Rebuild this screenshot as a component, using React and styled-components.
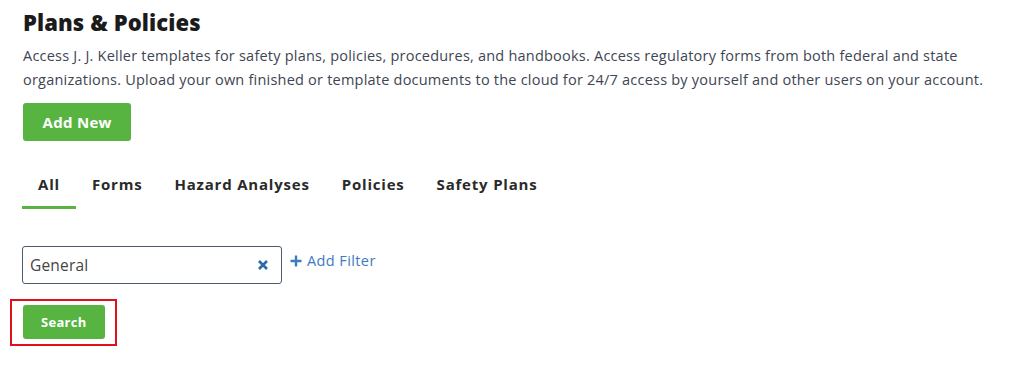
import React from "react";
import styled, { createGlobalStyle } from "styled-components";

const Global = createGlobalStyle`
  body { margin: 0; background: #fff; font-family: "Open Sans", "Lato", sans-serif; }
`;

const Page = styled.div`
  padding: 8px 23px 0 23px;
  display: flex;
  flex-direction: column;
  align-items: flex-start;
`;

const Title = styled.h1`
  margin: 0;
  font-size: 22px;
  font-weight: 800;
  color: #1b1b1b;
  line-height: 28px;
  letter-spacing: 0.1px;
`;

const Desc = styled.p`
  margin: 8px 0 0;
  font-size: 14.5px;
  line-height: 24px;
  color: #3e4552;
  letter-spacing: 0.22px;
  max-width: 975px;
`;

const GreenButton = styled.button`
  background: #57b440;
  color: #fff;
  border: none;
  border-radius: 3px;
  font-family: inherit;
  font-weight: 700;
  letter-spacing: 0.3px;
  font-size: ${(p) => (p.$small ? "13px" : "15px")};
  height: ${(p) => (p.$small ? "34px" : "38px")};
  padding: 0 ${(p) => (p.$small ? "18px" : "19.5px")};
  cursor: pointer;
  display: block;
`;

const AddWrap = styled.div`
  margin-top: 11px;
`;

const Tabs = styled.div`
  display: flex;
  margin: 24px 0 0 -1px;
`;

const Tab = styled.div`
  padding: 9px 16px 12px;
  font-size: 15px;
  font-weight: 700;
  letter-spacing: 0.8px;
  color: #2a2a2a;
  border-bottom: 3px solid ${(p) => (p.$active ? "#57b440" : "transparent")};
`;

const FilterRow = styled.div`
  display: flex;
  align-items: flex-start;
  gap: 8px;
  margin: 37px 0 0 -1px;
`;

const InputBox = styled.div`
  width: 260px;
  height: 38px;
  box-sizing: border-box;
  border: 1px solid #4e5a6e;
  border-radius: 3px;
  display: flex;
  align-items: center;
  padding: 0 12px 0 7px;
  justify-content: space-between;
`;

const InputText = styled.span`
  font-size: 15.5px;
  color: #444;
  letter-spacing: 0.2px;
`;

const Clear = styled.svg`
  width: 12px;
  height: 12px;
`;

const AddFilter = styled.a`
  display: flex;
  align-items: center;
  gap: 5px;
  margin-top: 5px;
  font-size: 14.5px;
  letter-spacing: 0.4px;
  color: #3d7bbd;
  text-decoration: none;
`;

const SearchFrame = styled.div`
  margin: 15px 0 0 -13px;
  border: 2px solid #e0101a;
  padding: 4px 10px 5px 11px;
`;

export default function App() {
  return (
    <>
      <Global />
      <Page>
        <Title>Plans &amp; Policies</Title>
        <Desc>
          Access J. J. Keller templates for safety plans, policies, procedures, and handbooks. Access regulatory forms from both federal and state organizations. Upload your own finished or template documents to the cloud for 24/7 access by yourself and other users on your account.
        </Desc>
        <AddWrap>
          <GreenButton>Add New</GreenButton>
        </AddWrap>
        <Tabs>
          <Tab $active>All</Tab>
          <Tab>Forms</Tab>
          <Tab>Hazard Analyses</Tab>
          <Tab>Policies</Tab>
          <Tab>Safety Plans</Tab>
        </Tabs>
        <FilterRow>
          <InputBox>
            <InputText>General</InputText>
            <Clear viewBox="0 0 12 12">
              <path d="M2 2 L10 10 M10 2 L2 10" stroke="#2c69a8" strokeWidth="2.6" strokeLinecap="butt" />
            </Clear>
          </InputBox>
          <AddFilter href="#">
            <svg width="12" height="12" viewBox="0 0 12 12">
              <path d="M6 0.5 V11.5 M0.5 6 H11.5" stroke="#3d7bbd" strokeWidth="2.4" />
            </svg>
            Add Filter
          </AddFilter>
        </FilterRow>
        <SearchFrame>
          <GreenButton $small>Search</GreenButton>
        </SearchFrame>
      </Page>
    </>
  );
}
